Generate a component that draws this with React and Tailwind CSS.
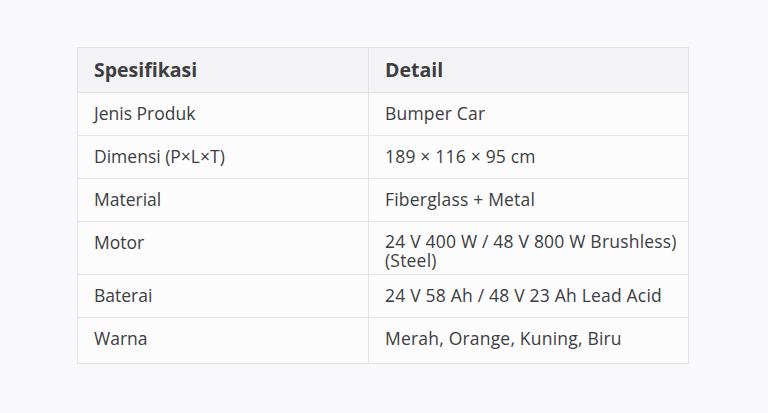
import React from 'react';

const rows = [
  { label: 'Jenis Produk', value: 'Bumper Car', h: 'h-[43px]' },
  { label: 'Dimensi (P×L×T)', value: '189 × 116 × 95 cm', h: 'h-[43px]' },
  { label: 'Material', value: 'Fiberglass + Metal', h: 'h-[43px]' },
  { label: 'Motor', value: ['24 V 400 W / 48 V 800 W Brushless)', '(Steel)'], h: 'h-[53px]' },
  { label: 'Baterai', value: '24 V 58 Ah / 48 V 23 Ah Lead Acid', h: 'h-[43px]' },
  { label: 'Warna', value: 'Merah, Orange, Kuning, Biru', h: 'h-[46px]' },
];

export default function App() {
  return (
    <div className="w-[768px] h-[413px] bg-[#f9f9fb] pt-[47px] pl-[77px] font-['Open_Sans',sans-serif] text-[#3d3d42]">
      <table className="w-[612px] border-collapse bg-[#fcfcfd] border border-[#e3e3e6] table-fixed">
        <thead>
          <tr className="h-[45px] bg-[#f3f3f5] border-b border-[#e3e3e6]">
            <th className="w-[291px] text-left pl-4 text-[19.5px] font-bold border-r border-[#e3e3e6]">Spesifikasi</th>
            <th className="text-left pl-4 text-[19.5px] font-bold">Detail</th>
          </tr>
        </thead>
        <tbody>
          {rows.map((r) => (
            <tr key={r.label} className={`${r.h} border-b border-[#e6e6e9] last:border-b-0`}>
              <td className="align-top pt-[10px] pl-4 text-[17.5px] leading-[21px] border-r border-[#e3e3e6]">{r.label}</td>
              <td className="align-top pt-[10px] pl-4 text-[17.5px] leading-[21px] tracking-[0.2px]">
                {Array.isArray(r.value) ? (
                  <div className="leading-[19px]">
                    {r.value.map((v) => <div key={v} className="whitespace-nowrap">{v}</div>)}
                  </div>
                ) : r.value}
              </td>
            </tr>
          ))}
        </tbody>
      </table>
    </div>
  );
}
